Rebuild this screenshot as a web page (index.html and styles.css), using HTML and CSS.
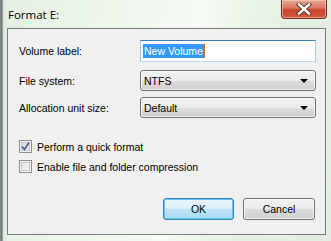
FILE: index.html
```html
<!DOCTYPE html>
<html>
<head>
<meta charset="utf-8">
<link rel="stylesheet" href="styles.css">
</head>
<body>
<div class="window">
  <div class="titlebar">
    <span class="title">Format E:</span>
    <button class="close" aria-label="Close">
      <svg width="18" height="12" viewBox="0 0 18 12">
        <path d="M4 1.5 L14 10.5 M14 1.5 L4 10.5" stroke="#4a3a36" stroke-width="4.2" stroke-linecap="square" fill="none"/>
        <path d="M4 1.5 L14 10.5 M14 1.5 L4 10.5" stroke="#ffffff" stroke-width="2.4" stroke-linecap="square" fill="none"/>
      </svg>
    </button>
  </div>
  <div class="client">
    <div class="form">
      <div class="row row-first">
        <label class="label">Volume label:</label>
        <div class="textbox"><span class="sel">New Volume</span></div>
      </div>
      <div class="row row-second">
        <label class="label">File system:</label>
        <div class="combo"><span>NTFS</span><span class="arrow"></span></div>
      </div>
      <div class="row row-third">
        <label class="label">Allocation unit size:</label>
        <div class="combo"><span>Default</span><span class="arrow"></span></div>
      </div>
    </div>
    <div class="checks">
      <div class="check">
        <span class="box checked">
          <svg width="9" height="9" viewBox="0 0 9 9"><path d="M1 4.5 L3.5 7.5 L8 0.5" stroke="#4a5a8c" stroke-width="1.6" fill="none"/></svg>
        </span>
        <span>Perform a quick format</span>
      </div>
      <div class="check">
        <span class="box"></span>
        <span>Enable file and folder compression</span>
      </div>
    </div>
    <div class="buttons">
      <button class="btn default">OK</button>
      <button class="btn">Cancel</button>
    </div>
  </div>
</div>
</body>
</html>
```

FILE: styles.css
```css
html, body {
  margin: 0;
  padding: 0;
}
body {
  width: 331px;
  height: 241px;
  overflow: hidden;
  font-family: "Liberation Sans", Arial, sans-serif;
  font-size: 10.5px;
  color: #000;
}
.window {
  width: 331px;
  height: 241px;
  box-sizing: border-box;
  display: flex;
  flex-direction: column;
  background:
    linear-gradient(90deg, #8f9a94 0px, #5d6a66 2px, #d9e4d6 3px, #e6f0e3 7px, rgba(230,240,227,0) 12px),
    linear-gradient(100deg, #e4efe1 0%, #eef6ec 30%, #f6fbf5 55%, #e8f2e5 70%, #e1ede0 100%);
}
.titlebar {
  height: 28px;
  display: flex;
  justify-content: space-between;
  align-items: flex-start;
  padding-left: 8px;
  padding-right: 4px;
}
.title {
  font-family: "Open Sans", "Liberation Sans", sans-serif;
  font-size: 11.5px;
  margin-top: 7px;
  color: #000;
}
.close {
  width: 46px;
  height: 19px;
  margin: 0;
  padding: 0;
  border: 1px solid #6d2a1e;
  border-top: none;
  border-radius: 0 0 4px 4px;
  background: linear-gradient(#e9a897 0%, #d9745d 45%, #c8432b 55%, #d35a3e 100%);
  box-shadow: inset 0 0 0 1px rgba(255,220,210,0.5);
  display: flex;
  align-items: center;
  justify-content: center;
}
.client {
  margin: 0 5px 6px 7px;
  flex: 1;
  border: 1px solid #7a7a7a;
  background: #f0f0f0;
  padding: 11px 9px 0 11px;
  display: flex;
  flex-direction: column;
}
.row {
  display: flex;
  align-items: center;
}
.label {
  width: 121px;
  flex: none;
}
.row-second { margin-top: 8px; }
.row-third { margin-top: 6px; }
.textbox {
  width: 176px;
  height: 22px;
  box-sizing: border-box;
  background: #fff;
  border: 1px solid #a8cbe4;
  border-top-color: #3d7bad;
  border-bottom-color: #b7d9ed;
  display: flex;
  align-items: center;
  padding-left: 2px;
}
.sel {
  background: #3399ff;
  color: #fff;
  line-height: 14px;
  padding: 0 1px;
  border-right: 1px solid #d46a1c;
}
.combo {
  width: 176px;
  height: 21px;
  box-sizing: border-box;
  border: 1px solid #707070;
  border-radius: 3px;
  background: linear-gradient(#f2f2f2 0%, #ebebeb 50%, #dddddd 51%, #cfcfcf 100%);
  box-shadow: inset 0 0 0 1px rgba(255,255,255,0.7);
  display: flex;
  align-items: center;
  justify-content: space-between;
  padding: 0 7px 0 3px;
}
.arrow {
  width: 0;
  height: 0;
  border-left: 4px solid transparent;
  border-right: 4px solid transparent;
  border-top: 4px solid #000;
}
.checks {
  margin-top: 22px;
  display: flex;
  flex-direction: column;
  gap: 7px;
}
.check {
  display: flex;
  align-items: center;
  gap: 5px;
  height: 13px;
}
.box {
  width: 13px;
  height: 13px;
  box-sizing: border-box;
  border: 1px solid #8e8f8f;
  background: linear-gradient(135deg, #dcdcdc 0%, #f0f0f0 60%, #fbfbfb 100%);
  box-shadow: inset 0 0 0 1px #f4f4f4, inset 0 0 0 2px #c8c8c8;
  display: flex;
  align-items: center;
  justify-content: center;
}
.box.checked {
  background: linear-gradient(135deg, #c9d3e8 0%, #e2e8f3 60%, #f1f4f9 100%);
}
.buttons {
  margin-top: 25px;
  display: flex;
  justify-content: flex-end;
  gap: 9px;
  padding-right: 1px;
}
.btn {
  width: 72px;
  height: 22px;
  margin: 0;
  padding: 0;
  font-family: "Liberation Sans", Arial, sans-serif;
  font-size: 10.5px;
  color: #000;
  border: 1px solid #707070;
  border-radius: 3px;
  background: linear-gradient(#f2f2f2 0%, #ebebeb 50%, #dddddd 51%, #cfcfcf 100%);
  box-shadow: inset 0 0 0 1px rgba(255,255,255,0.75);
}
.btn.default {
  width: 71px;
  border-color: #3c7fb1;
  background: linear-gradient(#eaf6fd 0%, #d9f0fc 50%, #bee6fd 51%, #a7d9f5 100%);
  box-shadow: inset 0 0 0 1px #62c7f0;
}
```
